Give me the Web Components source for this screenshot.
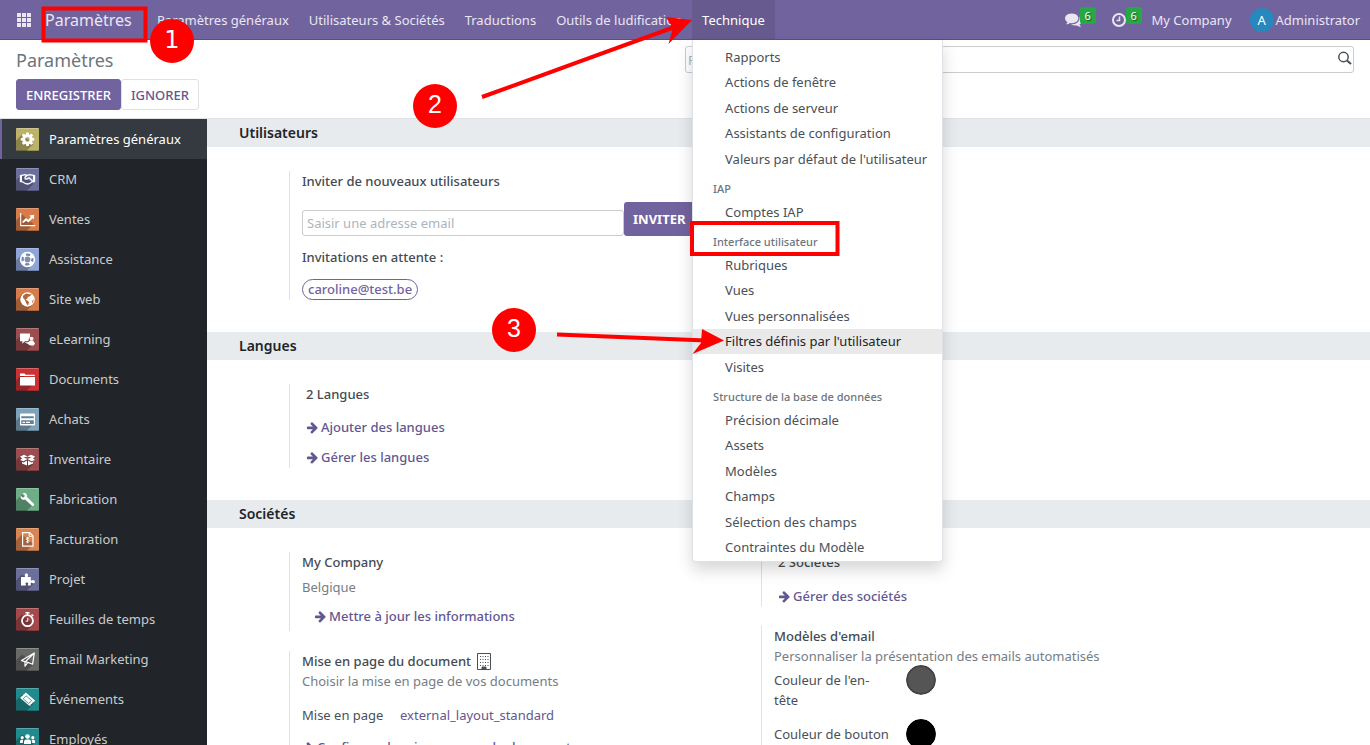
<!DOCTYPE html>
<html lang="fr">
<head>
<meta charset="utf-8">
<title>Paramètres</title>
<style>
  html, body { margin: 0; height: 100%; }
  body {
    font: 400 13px/20px "Noto Sans", "Open Sans", sans-serif;
    color: #495057; background: #fff; overflow: hidden; position: relative;
    --brand: #71639e; --link: #63578f; --line: #dee2e6; --muted: #767d84; --strong: #444b52;
  }
</style>
</head>
<body>
<settings-app></settings-app>
<step-marks></step-marks>

<script>
const define = (name, html, setup) => {
  const tpl = document.createElement('template');
  tpl.innerHTML = html;
  customElements.define(name, class extends HTMLElement {
    constructor() {
      super();
      this.attachShadow({ mode: 'open' }).append(tpl.content.cloneNode(true));
    }
    connectedCallback() { if (setup) setup(this, this.shadowRoot); }
  });
};

/* Glyphs of the interface, on a 1792 grid unless stated */
const GLYPHS = {
  cog: 'M1152 896q0-106-75-181t-181-75-181 75-75 181 75 181 181 75 181-75 75-181zm512-109v222q0 12-8 23t-20 13l-185 28q-19 54-39 91 35 50 107 138 10 12 10 25t-9 23q-27 37-99 108t-94 71q-12 0-26-9l-138-108q-44 23-91 38-16 136-29 186-7 28-36 28h-222q-14 0-24.5-8.5t-11.5-21.5l-28-184q-49-16-90-37l-141 107q-10 9-25 9-14 0-25-11-126-114-165-168-7-10-7-23 0-12 8-23 15-21 51-66.5t54-70.5q-27-50-41-99l-183-27q-13-2-21-12.5t-8-23.5v-222q0-12 8-23t19-13l186-28q14-46 39-92-40-57-107-138-10-12-10-24 0-10 9-23 26-36 98.5-107.5t94.5-71.5q13 0 26 10l138 107q44-23 91-38 16-136 29-186 7-28 36-28h222q14 0 24.5 8.5t11.5 21.5l28 184q49 16 90 37l142-107q9-9 24-9 13 0 25 10 129 119 165 170 7 8 7 22 0 12-8 23-15 21-51 66.5t-54 70.5q26 50 41 98l183 28q13 2 21 12.5t8 23.5z',
  comments: 'M1408 768q0 139-94 257t-256.5 186.5-353.5 68.5q-86 0-176-16-124 88-278 128-36 9-86 16h-3q-11 0-20.5-8t-11.5-21q-1-3-1-6.5t.5-6.5 2-6l2.5-5 3.5-5.5 4-5 4.5-5 4-4.5q5-6 23-25t26-29.5 22.5-29 25-38.5 20.5-44q-124-72-195-177t-71-224q0-139 94-257t256.5-186.5 353.5-68.5 353.5 68.5 256.5 186.5 94 257zm384 256q0 120-71 224.5t-195 176.5q10 24 20.5 44t25 38.5 22.5 29 26 29.5 23 25q1 1 4 4.5t4.5 5 4 5 3.5 5.5l2.5 5 2 6 .5 6.5-1 6.5q-3 14-13 22t-22 7q-50-7-86-16-154-40-278-128-90 16-176 16-271 0-472-132 58 4 88 4 161 0 309-45t264-129q125-92 192-212t67-254q0-77-23-152 129 71 204 178t75 230z',
  arrow: 'M1600 960q0 54-37 91l-651 651q-39 37-91 37-51 0-90-37l-75-75q-38-38-38-91t38-91l293-293h-704q-52 0-84.5-37.5t-32.5-90.5v-128q0-53 32.5-90.5t84.5-37.5h704l-293-294q-38-36-38-90t38-90l75-75q38-38 90-38 53 0 91 38l651 651q37 35 37 90z'
};

/* Application tiles: label, colour, glyph on a 23 px tile */
const APPS = [
  ['Paramètres généraux', '#bdb368', `<g transform="translate(3.6 3.4) scale(.0088)"><path d="${GLYPHS.cog}"/></g>`],
  ['CRM', '#6c6f9b', '<path d="M3.8 7.2l2.2-.8v8.2l-2.2-.6zM19.2 7.2L17 6.4v8.2l2.2-.6z"/><path d="M6 7.400l3-.8 2.300.7M17 7.400l-3.200-.8-2.500.7-2.300 1.900.2 1.700 1.800.1 2-1.300 4 3.600M6 13.500l3.600 2.200 2.400.3 2.800-1.200 2.200-1.600" fill="none" stroke="#fff" stroke-width="1.300"/>'],
  ['Ventes', '#d67c4b', '<path d="M4.700 5v12.600h14.500" fill="none" stroke="#fff" stroke-width="1.100"/><path d="M7 15.200l-.6-1.600 3.600-3.700 2.300 1.800 2.500-2.800L13.500 7.600l4.700-.9-.4 4.900-1.400-1.400-3.900 4.400-2.400-1.900z"/>'],
  ['Assistance', '#8fa4d6', '<circle cx="11.500" cy="11.500" r="7.700"/><g fill="none" stroke="#7187bd"><circle cx="11.500" cy="11.500" r="4.900" stroke-width="2.300" stroke-dasharray="4.200 3.497" stroke-dashoffset="2.100"/></g><circle cx="11.500" cy="11.500" r="2.900" fill="#7f8fae"/>'],
  ['Site web', '#d67c4b', '<circle cx="11.500" cy="11.500" r="7.200"/><path fill="#b5683f" d="M7.200 7.600l3-2 3.300.6 2.300-.3-1.800 2.300-2.200.8-.6 2-1.800.3 1.900 1.300 1.800 1.500-1.100 3.600-1.600-2.200-1.700-3.700-1.800-2.400z M16.500 12.500l1.200-1-.6 2.800-1.100 1z"/>'],
  ['eLearning', '#9c4d4f', '<path d="M4 5.500h10v3.800l-1.500 1.700.5 1.300-1.500.9H9l-3 2.500.5-2.500H4z"/><circle cx="15.600" cy="10.600" r="1.900"/><path d="M8.500 14.300l3.500 0 2.200-1.700h2.800l1.200 1.700.800 1.300-1.300 2h-3.700l-2-1.700z"/>'],
  ['Documents', '#cb3236', '<path d="M4 5.500h4.500l1.200 1.300h9V8H4z"/><path d="M4 9h15v8.500H4z"/>'],
  ['Achats', '#7da3bb', '<rect x="4" y="5.500" width="15" height="12" rx="1"/><path d="M5.200 8.200h12.600v2H5.200zM5.200 12.200h12.600V16H5.200z" fill="#5f8297"/><path d="M6.500 13.800h2.500v1.200H6.500zm3.500 0h4v1.200h-4z"/>'],
  ['Inventaire', '#9c4d4f', '<path d="M4 8.500l4-1.700 3.500 1.700L15 6.800l4 1.700-2 2 2 1.500-3.500 1.200-4-2.200-4 2.200L4 12l2-1.500z"/><path d="M6 14l1.700.6 3.300-2v5L6 15.600zM17 14l-1.700.6-3.300-2v5l5-2z"/><path fill="#9c4d4f" d="M7.500 9.600l4 1.500 4-1.500-4-1z"/>'],
  ['Fabrication', '#6eae87', '<path d="M9 11.400l7.200 6.500q1.200.5 1.800-.6.500-1-.4-1.800L11 9q.6-2.500-1.400-3.700Q8 4.600 6.500 5.300l2.200 1.900-.4 1.700-1.700.6-2-2q-.5 2.500 1.200 3.700 1.500.9 3.200.2z"/>'],
  ['Facturation', '#d98552', '<path d="M6.600 4.600h7l3.400 3.400v10.200H6.600z" fill="none" stroke="#fff" stroke-width="1.200"/><path d="M13.200 4.800v3.500h3.600" fill="none" stroke="#fff"/><path d="M13.300 10.200q-3.400-.7-3.400.6 0 .9 1.700 1.200t1.700 1.300q0 1.300-3.400.6M11.600 9v6.200" fill="none" stroke="#fff" stroke-width=".9"/>'],
  ['Projet', '#6c6f9b', '<path d="M5 9h3.800q.6 0 .4-.7-1-1.500.2-2.600.9-.9 2.100 0 1.200 1.100.2 2.600-.2.700.4.700h2.700v3q0 .8.800.5 1.600-1.200 3 .2 1 1.300-.2 2.300-1.200.8-2.500-.2-.9-.5-1.100.3v2.500h-2.700q-.6-.4-.1-1 .8-1.500-.6-2.100-1.500-.4-1.900.8-.1.700.4 1.300.3.600-.2 1H5z"/>'],
  ['Feuilles de temps', '#a3484b', '<circle cx="11.500" cy="12.700" r="5.500" fill="none" stroke="#fff" stroke-width="1.800"/><path d="M9.500 4h4v1.500h-4zM10.800 5h1.400v2h-1.400zM16 6l1.800 1.600-1 1L15 7z"/><path d="M11.800 10v3.100H9.600" fill="none" stroke="#fff"/>'],
  ['Email Marketing', '#686a68', '<path d="M5.500 12.600L18.300 5l-1.700 11.200-4.100-1.600zM9 14l9-8.600M9 14v4.200l2.800-3.700" fill="none" stroke="#fff" stroke-width="1.200" stroke-linejoin="round"/>'],
  ['Événements', '#218a8c', '<path d="M9.800 4.600l9.200 7.800-1 1.500-1.300.3-.5 1.400-1.600.9.100 1.200-1.700-.2L4.200 9.900l.9-1.500 1.300-.2.500-1.300 1.500-1z"/><path d="M10 7.800l5.700 4.800-3 2.900L7.200 10.800z" fill="none" stroke="#218a8c" stroke-width=".8"/>'],
  ['Employés', '#218a8c', '<circle cx="11.500" cy="8.500" r="2.300"/><circle cx="6.200" cy="9.600" r="1.600"/><circle cx="16.800" cy="9.600" r="1.600"/><path d="M8 16v-2.600q.3-1.900 2-1.900h3q1.700 0 2 1.900V16zM4 15v-2q.2-1.300 1.500-1.300h1.800q-.5.800-.5 3.300zM19 15v-2q-.2-1.300-1.500-1.300h-1.800q.5.800.5 3.300z"/>']
];

define('ui-glyph', `<style>:host{display:inline-block;width:13px;height:13px;flex:none}svg{display:block;width:100%;height:100%;fill:currentColor}</style><svg viewBox="0 0 1792 1792" aria-hidden="true"><path/></svg>`,
  (el, root) => root.querySelector('path').setAttribute('d', GLYPHS[el.getAttribute('name')]));

define('nav-link', `<style>
  :host{display:block;position:relative}
  a{display:block;height:39px;line-height:40px;padding:0 10px;color:#e9e6f2;text-decoration:none;white-space:nowrap}
  :host([active]) a{background:#665a8f;color:#fff}
</style><a href="#"><slot></slot></a><slot name="menu"></slot>`);

define('menu-group', `<style>
  :host{display:block}
  h6{margin:0;padding:9px 20px 3px;font-size:11px;font-weight:500;line-height:16px;color:#6c757d}
  ul{margin:0;padding:0;list-style:none;display:grid;grid-auto-rows:25px 26px;align-items:start}
  a{display:block;padding:0 12px 0 32px;line-height:25px;color:#495057;text-decoration:none;white-space:nowrap}
  a.on{background:#e9e9e9;color:#212529}
</style><h6></h6><ul></ul>`, (el, root) => {
  const h = root.querySelector('h6'), title = el.getAttribute('heading');
  if (title) h.textContent = title; else h.remove();
  root.querySelector('ul').innerHTML = el.getAttribute('items').split('|')
    .map(t => t[0] === '*' ? `<li><a class="on" href="#">${t.slice(1)}</a></li>` : `<li><a href="#">${t}</a></li>`).join('');
});

define('drop-menu', `<style>
  :host{display:block;position:absolute;z-index:5;top:40px;left:0;box-sizing:border-box;min-width:251px;padding-top:5px;
    background:#fff;border:1px solid var(--line);border-top:0;border-radius:0 0 4px 4px;box-shadow:0 8px 16px rgba(0,0,0,.16)}
</style>
<menu-group items="Rapports|Actions de fenêtre|Actions de serveur|Assistants de configuration|Valeurs par défaut de l'utilisateur"></menu-group>
<menu-group heading="IAP" items="Comptes IAP"></menu-group>
<menu-group heading="Interface utilisateur" items="Rubriques|Vues|Vues personnalisées|*Filtres définis par l'utilisateur|Visites"></menu-group>
<menu-group heading="Structure de la base de données" items="Précision décimale|Assets|Modèles|Champs|Sélection des champs|Contraintes du Modèle"></menu-group>`);

define('count-button', `<style>
  :host{display:block;position:relative;width:46px;height:39px}
  button{display:flex;align-items:center;height:39px;padding:0;border:0;background:none;color:#e9e6f2;font:inherit}
  b{position:absolute;left:15px;top:7px;width:16px;border-radius:3px;background:#28a745;color:#fff;font-size:11px;font-weight:400;line-height:17px;text-align:center;text-shadow:1px 1px 1px rgba(0,0,0,.5)}
</style><button type="button"><slot></slot><b></b></button>`,
  (el, root) => { root.querySelector('b').textContent = el.getAttribute('count'); root.querySelector('button').setAttribute('aria-label', el.title); });

define('main-navbar', `<style>
  :host{display:flex;height:39px;background:var(--brand);border-bottom:1px solid #5a4f7f;color:#e9e6f2}
  button{border:0;background:none;padding:0;font:inherit;color:inherit}
  .apps{display:flex;align-items:center;width:45px;padding-left:17px;box-sizing:border-box;flex:none}
  .brand{width:102px;flex:none;font-size:16px;line-height:40px;color:inherit;text-decoration:none}
  nav{display:flex}
  .tray{display:flex;margin-left:auto;padding-right:10px}
  .company{margin:0 18px 0 -5px;line-height:40px}
  .user{display:flex;align-items:center;gap:2px;height:40px}
  .avatar{width:24px;border-radius:50%;background:#2688bd;color:#fff;line-height:24px;text-align:center}
  svg{display:block}
</style>
<button class="apps" type="button" aria-label="Applications"><svg width="14" height="14" fill="currentColor"><path d="M0 0h4v4H0zM5 0h4v4H5zM10 0h4v4h-4zM0 5h4v4H0zM5 5h4v4H5zM10 5h4v4h-4zM0 10h4v4H0zM5 10h4v4H5zM10 10h4v4h-4z"/></svg></button>
<a class="brand" href="#">Paramètres</a>
<nav>
  <nav-link>Paramètres généraux</nav-link><nav-link>Utilisateurs &amp; Sociétés</nav-link><nav-link>Traductions</nav-link><nav-link>Outils de ludification</nav-link>
  <nav-link active>Technique<drop-menu slot="menu"></drop-menu></nav-link>
</nav>
<div class="tray">
  <count-button count="6" title="Conversations"><ui-glyph name="comments" style="width:17px;height:17px"></ui-glyph></count-button>
  <count-button count="6" title="Activités"><svg width="16" height="16" fill="none" stroke="currentColor" stroke-width="2"><circle cx="8" cy="8" r="6"/><path d="M8.500 4.500v4H5.500" stroke-width="1.500"/></svg></count-button>
  <button class="company" type="button">My Company</button>
  <button class="user" type="button"><span class="avatar">A</span><span>Administrator</span></button>
</div>`);

define('control-panel', `<style>
  :host{display:grid;grid-template-columns:1fr 1fr;box-sizing:border-box;height:79px;border-bottom:1px solid var(--line)}
  .left{padding-left:16px}
  h1{margin:0;padding:8px 0 7px;font-size:18px;font-weight:400;line-height:24px;color:#6c757d}
  .row{display:flex}
  button{box-sizing:border-box;height:31px;padding:0 9px;border:1px solid var(--brand);border-radius:3px;background:var(--brand);color:#fff;font:500 13px/20px "Noto Sans",sans-serif;text-transform:uppercase}
  .flat{background:#fff;border-color:var(--line);color:var(--link)}
  .search{position:relative;padding:6px 16px 0 0}
  input{display:block;box-sizing:border-box;width:100%;height:27px;border:1px solid #ccc;border-radius:3px;padding:0 30px 0 2px;font:inherit;outline:0}
  input::placeholder{color:#adb5bd;opacity:1}
  svg{position:absolute;right:18px;top:11px}
</style>
<div class="left"><h1>Paramètres</h1><div class="row"><button type="button">Enregistrer</button><button class="flat" type="button">Ignorer</button></div></div>
<div class="search"><input type="search" aria-label="Recherche" placeholder="Recherche..."><svg width="15" height="15" fill="none" stroke="#495057" stroke-width="1.500"><circle cx="6.500" cy="6" r="4.700"/><path d="M10 9.500l4 3.500" stroke-width="2"/></svg></div>`);

define('app-sidebar', `<style>
  :host{display:block;width:207px;flex:none;background:#212529;overflow:hidden}
  a{display:flex;align-items:center;gap:10px;height:40px;padding-left:16px;color:#c8cbce;text-decoration:none;box-sizing:border-box}
  a[aria-current]{background:#343a40;color:#fff;border-left:2px solid var(--brand);padding-left:14px}
  svg{display:block;border-radius:1px;fill:#fff;flex:none}
</style><nav aria-label="Applications"></nav>`, (el, root) => {
  root.querySelector('nav').innerHTML = APPS.map(([name, color, glyph], i) =>
    `<a href="#"${i ? '' : ' aria-current="page"'}><svg width="23" height="23" viewBox="0 0 23 23" aria-hidden="true"><path fill="${color}" d="M0 0h23v23H0z"/><path fill="#fff" fill-opacity=".25" d="M0 0h23v1H0z"/><path fill="#000" fill-opacity=".26" d="M0 12.500L6 6.500l11.500 9.500-7 7H0z"/><path fill="#000" fill-opacity=".2" d="M0 22h23v1H0z"/>${glyph}</svg><span>${name}</span></a>`).join('');
});

define('settings-section', `<style>
  :host{display:block;padding-bottom:32px}
  h2{margin:0;padding:0 32px;background:#e7ebee;color:#212529;font-size:14px;font-weight:600;line-height:28px}
  .cols{display:grid;grid-template-columns:repeat(2,minmax(0,472px));padding:24px 0 0 82px}
  .col{display:grid;gap:20px;align-content:start}
</style><h2></h2><div class="cols"><div class="col"><slot></slot></div><div class="col"><slot name="right"></slot></div></div>`,
  (el, root) => { root.querySelector('h2').textContent = el.getAttribute('heading'); });

define('setting-box', `<style>:host{display:block;border-left:1px solid var(--line);padding-left:12px}</style><slot></slot>`);

define('arrow-link', `<style>
  :host{display:flex}
  a{display:flex;align-items:center;gap:2px;color:var(--link);font-weight:500;text-decoration:none;white-space:nowrap}
</style><a href="#"><ui-glyph name="arrow"></ui-glyph><slot></slot></a>`);

const BOX_CSS = `h3{margin:0;font-size:13px;font-weight:500;line-height:20px;color:var(--strong)} p{margin:0;color:var(--muted)}`;

define('invite-form', `<style>
  :host{display:block} ${BOX_CSS}
  form{display:flex;align-items:flex-end;margin:11px 0}
  input{box-sizing:border-box;width:322px;height:26px;border:1px solid #ccc;border-radius:3px;padding:0 4px;font:inherit;outline:0}
  input::placeholder{color:#adb5bd;opacity:1}
  button{height:34px;padding:0 9px;border:0;border-radius:3px;background:var(--brand);color:#fff;font:700 13px/20px "Noto Sans",sans-serif}
  a{display:inline-block;margin-top:12px;padding:0 5px;border:1px solid var(--brand);border-radius:11px;color:var(--brand);font-weight:500;line-height:19px;text-decoration:none;vertical-align:top}
</style><h3>Inviter de nouveaux utilisateurs</h3>
<form><input type="email" aria-label="Adresse email" placeholder="Saisir une adresse email"><button type="button">INVITER</button></form>
<h3>Invitations en attente :</h3><a href="#">caroline@test.be</a>`);

define('language-links', `<style>:host{display:grid;gap:10px;padding:0 0 1px 4px} ${BOX_CSS} h3{margin-bottom:3px}</style>
<h3>2 Langues</h3><arrow-link>Ajouter des langues</arrow-link><arrow-link>Gérer les langues</arrow-link>`);

define('company-info', `<style>:host{display:block;padding-bottom:5px} ${BOX_CSS} p{margin:5px 0 9px} arrow-link{padding-left:12px}</style>
<h3>My Company</h3><p>Belgique</p><arrow-link>Mettre à jour les informations</arrow-link>`);

define('company-count', `<style>:host{display:grid;gap:14px;padding-left:4px} ${BOX_CSS}</style>
<h3>2 Sociétés</h3><arrow-link>Gérer des sociétés</arrow-link>`);

define('document-layout', `<style>
  :host{display:block} ${BOX_CSS}
  h3{display:flex;align-items:center;gap:6px}
  .row{display:flex;margin:14px 0 12px}
  .row span{width:98px} .row a{color:var(--link);text-decoration:none}
  svg{display:block}
</style><h3>Mise en page du document <svg width="14" height="17" fill="none" stroke="#495057"><path d="M.5.500h13v16H.500z" /><path d="M3 3.500h9M3 6.500h9M3 9.500h9M3 12.500h9" stroke-dasharray="1 1.500"/><path d="M5 16v-2h4v2z" fill="#495057"/></svg></h3>
<p>Choisir la mise en page de vos documents</p>
<div class="row"><span>Mise en page</span><a href="#">external_layout_standard</a></div>
<arrow-link>Configurer la mise en page du document</arrow-link>`);

define('email-colors', `<style>
  :host{display:block} ${BOX_CSS}
  .row{display:grid;grid-template-columns:132px 30px;align-items:start;height:54px}
  label{padding:5px 16px 0 0}
  input{appearance:none;width:30px;height:30px;padding:0;border:0;border-radius:50%;background:none;overflow:hidden}
  input::-webkit-color-swatch-wrapper{padding:0}
  input::-webkit-color-swatch{border:2px solid #444;border-radius:50%}
  #button-color::-webkit-color-swatch{border-color:#000}
  .rows{margin-top:-1px}
</style><h3>Modèles d'email</h3><p>Personnaliser la présentation des emails automatisés</p>
<div class="rows">
<div class="row"><label for="header-color">Couleur de l'en-tête</label><input type="color" id="header-color" value="#555555"></div>
<div class="row"><label for="button-color">Couleur de bouton</label><input type="color" id="button-color" value="#000000"></div>
</div>`);

define('settings-app', `<style>
  :host{display:flex;flex-direction:column;height:100%}
  .body{display:flex;flex:1;min-height:0}
  main{flex:1;min-width:0;overflow:auto;scrollbar-width:none}
</style>
<main-navbar></main-navbar><control-panel></control-panel>
<div class="body"><app-sidebar></app-sidebar><main>
  <settings-section heading="Utilisateurs"><setting-box><invite-form></invite-form></setting-box></settings-section>
  <settings-section heading="Langues"><setting-box><language-links></language-links></setting-box></settings-section>
  <settings-section heading="Sociétés">
    <setting-box><company-info></company-info></setting-box>
    <setting-box><document-layout></document-layout></setting-box>
    <setting-box slot="right"><company-count></company-count></setting-box>
    <setting-box slot="right"><email-colors></email-colors></setting-box>
  </settings-section>
</main></div>`);

/* Numbered walkthrough marks laid over the page */
define('step-marks', `<style>
  :host{position:absolute;z-index:10;top:0;left:0;pointer-events:none}
  svg{display:block;overflow:visible}
  text{fill:#fff;font:25px "Liberation Sans",sans-serif;text-anchor:middle}
  .one{font:24px "DejaVu Sans",sans-serif}
</style>
<svg width="860" height="400" fill="red">
  <g fill="none" stroke="red" stroke-width="4"><path d="M43.500 8.500h102v32h-102zM692 223h145.500v31H692z"/><path d="M482 97L676 26.500M557 334.500L706 340.500"/></g>
  <path d="M692 20L666 17 673 28 668.500 44zM724 340.500L702 329 701 343 692.500 354z"/>
  <circle cx="172" cy="41" r="22"/><circle cx="435" cy="106" r="22"/><circle cx="514" cy="330" r="22"/>
  <text class="one" x="172" y="48">1</text><text x="435" y="113">2</text><text x="514" y="337">3</text>
</svg>`);
</script>
</body>
</html>
